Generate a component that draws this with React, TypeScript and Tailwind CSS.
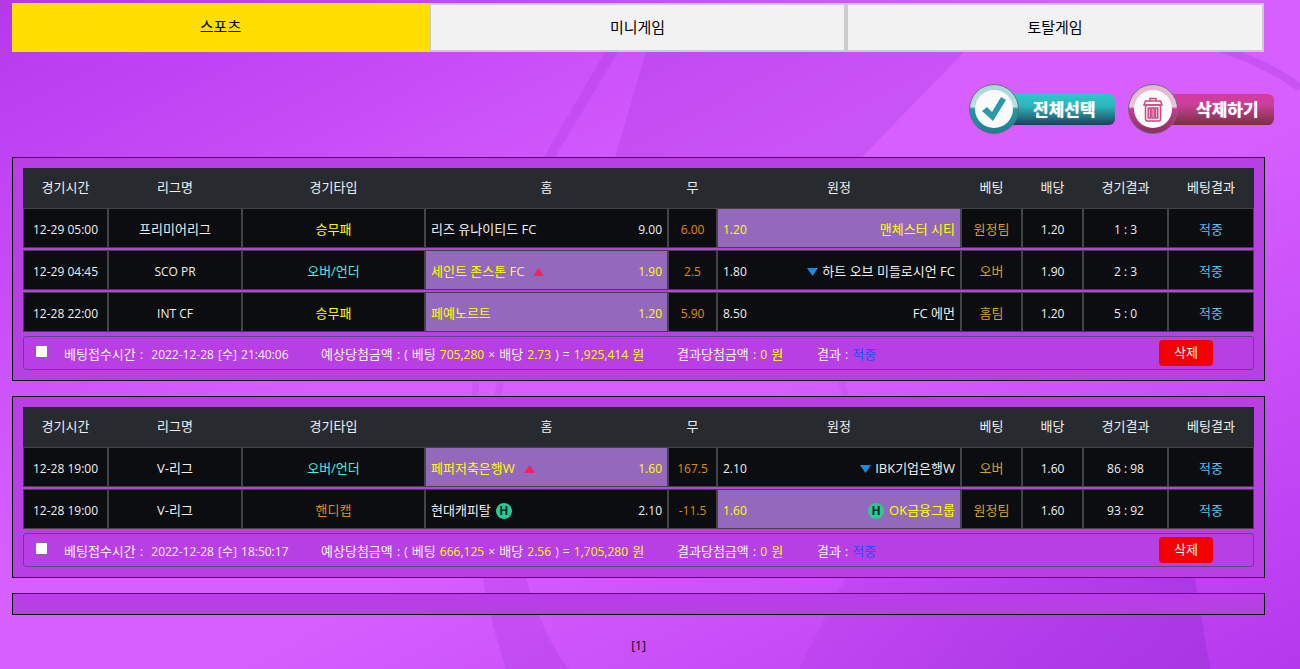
import React from "react";

const grid =
  "grid grid-cols-[85px_134px_183px_243px_49px_244px_61px_61px_85px_86px]";
const cell = "flex items-center border border-[#444] bg-[#0b0d10] h-[40px] pt-[4px]";

// korean text runs a size bigger than the latin numbers in the reference
const K = ({ children }: { children: React.ReactNode }) => (
  <span className="text-[13px]">{children}</span>
);

const Up = () => (
  <svg width="11" height="8" viewBox="0 0 11 8" className="ml-[9px]">
    <path d="M5.5 0 L11 8 L0 8 Z" fill="#f5225f" />
  </svg>
);

const Down = () => (
  <svg width="11" height="8" viewBox="0 0 11 8" className="mr-[4px]">
    <path d="M0 0 L11 0 L5.5 8 Z" fill="#1e88e5" />
  </svg>
);

const HBadge = ({ className = "" }: { className?: string }) => (
  <span
    className={`inline-flex items-center justify-center w-[16px] h-[16px] rounded-full bg-[#2dc997] text-[#0b2a20] text-[12px] font-bold ${className}`}
  >
    H
  </span>
);

type Side = { name: React.ReactNode; odds: string; picked?: boolean };

type Match = {
  time: string;
  league: React.ReactNode;
  type: string;
  typeColor: string;
  home: Side;
  mid: string;
  away: Side;
  bet: string;
  rate: string;
  score: string;
};

const MatchRow = ({ m }: { m: Match }) => {
  const homeBg = m.home.picked ? "bg-[#9468bd] text-[#ffff00]" : "bg-[#0b0d10] text-[#f0f0f0]";
  const awayBg = m.away.picked ? "bg-[#9468bd] text-[#ffff00]" : "bg-[#0b0d10] text-[#f0f0f0]";
  return (
    <div className={`${grid} pr-[1px]`}>
      <div className={`${cell} justify-center text-[#f0f0f0]`}>{m.time}</div>
      <div className={`${cell} justify-center text-[#f0f0f0]`}>{m.league}</div>
      <div className={`${cell} justify-center ${m.typeColor}`}><K>{m.type}</K></div>
      <div className={`${cell} ${homeBg} justify-between px-[5px]`}>
        <span className="flex items-center text-[13px]">{m.home.name}</span>
        <span>{m.home.odds}</span>
      </div>
      <div className={`${cell} justify-center text-[#e08a10]`}>{m.mid}</div>
      <div className={`${cell} ${awayBg} justify-between px-[5px]`}>
        <span>{m.away.odds}</span>
        <span className="flex items-center text-[13px]">{m.away.name}</span>
      </div>
      <div className={`${cell} justify-center text-[#d4a030]`}><K>{m.bet}</K></div>
      <div className={`${cell} justify-center text-[#f0f0f0]`}>{m.rate}</div>
      <div className={`${cell} justify-center text-[#f0f0f0]`}>{m.score}</div>
      <div className={`${cell} justify-center text-[#5bc0ee]`}><K>적중</K></div>
    </div>
  );
};

const headers = ["경기시간", "리그명", "경기타입", "홈", "무", "원정", "베팅", "배당", "경기결과", "베팅결과"];

type Bet = {
  matches: Match[];
  at: string;
  stake: string;
  rate: string;
  win: string;
};

const Y = "text-[#ffff00]";

const BetPanel = ({ bet }: { bet: Bet }) => (
  <section className="border border-black bg-[#b73fe3] p-[10px]">
    <div className={`${grid} bg-[#272b30] h-[40px] items-center text-center text-[13px] text-[#f0f0f0]`}>
      {headers.map((h) => (
        <div key={h}>{h}</div>
      ))}
    </div>
    <div className="flex flex-col gap-[2px]">
      {bet.matches.map((m) => (
        <MatchRow key={m.time + m.type + m.home.odds} m={m} />
      ))}
    </div>
    <div className="mt-[4px] h-[34px] flex items-center border border-[#5b4a80] rounded-[3px] text-[#f5f5f5] pl-[11px] [word-spacing:1px]">
      <input type="checkbox" className="w-[13px] h-[13px] appearance-none bg-white border border-[#767676] rounded-[2px] mb-[3px]" />
      <span className="ml-[16px] w-[257px] whitespace-nowrap pt-[4px]">
        <K>베팅접수시간</K> :&nbsp; {bet.at}
      </span>
      <span className="w-[356px] whitespace-nowrap pt-[4px]">
        <K>예상당첨금액</K> : ( <K>베팅</K> <span className={Y}>{bet.stake}</span> × <K>배당</K>{" "}
        <span className={Y}>{bet.rate}</span> ) = <span className={Y}>{bet.win} <K>원</K></span>
      </span>
      <span className="w-[140px] whitespace-nowrap pt-[4px]">
        <K>결과당첨금액</K> : <span className={Y}>0 <K>원</K></span>
      </span>
      <span className="w-[342px] whitespace-nowrap pt-[4px]">
        <K>결과</K> : <span className="text-[#1a4fff]"><K>적중</K></span>
      </span>
      <button className="w-[54px] h-[26px] bg-[#f50000] rounded-[4px] text-white"><K>삭제</K></button>
    </div>
  </section>
);

const bets: Bet[] = [
  {
    at: "2022-12-28 [수] 21:40:06",
    stake: "705,280",
    rate: "2.73",
    win: "1,925,414",
    matches: [
      {
        time: "12-29 05:00",
        league: <K>프리미어리그</K>,
        type: "승무패",
        typeColor: "text-[#ffff00]",
        home: { name: "리즈 유나이티드 FC", odds: "9.00" },
        mid: "6.00",
        away: { name: "맨체스터 시티", odds: "1.20", picked: true },
        bet: "원정팀",
        rate: "1.20",
        score: "1 : 3",
      },
      {
        time: "12-29 04:45",
        league: "SCO PR",
        type: "오버/언더",
        typeColor: "text-[#4deee0]",
        home: { name: <>세인트 존스톤 FC<Up /></>, odds: "1.90", picked: true },
        mid: "2.5",
        away: { name: <><Down />하트 오브 미들로시언 FC</>, odds: "1.80" },
        bet: "오버",
        rate: "1.90",
        score: "2 : 3",
      },
      {
        time: "12-28 22:00",
        league: "INT CF",
        type: "승무패",
        typeColor: "text-[#ffff00]",
        home: { name: "페예노르트", odds: "1.20", picked: true },
        mid: "5.90",
        away: { name: "FC 에먼", odds: "8.50" },
        bet: "홈팀",
        rate: "1.20",
        score: "5 : 0",
      },
    ],
  },
  {
    at: "2022-12-28 [수] 18:50:17",
    stake: "666,125",
    rate: "2.56",
    win: "1,705,280",
    matches: [
      {
        time: "12-28 19:00",
        league: <K>V-리그</K>,
        type: "오버/언더",
        typeColor: "text-[#4deee0]",
        home: { name: <>페퍼저축은행W<Up /></>, odds: "1.60", picked: true },
        mid: "167.5",
        away: { name: <><Down />IBK기업은행W</>, odds: "2.10" },
        bet: "오버",
        rate: "1.60",
        score: "86 : 98",
      },
      {
        time: "12-28 19:00",
        league: <K>V-리그</K>,
        type: "핸디캡",
        typeColor: "text-[#e08a10]",
        home: { name: <>현대캐피탈<HBadge className="ml-[5px]" /></>, odds: "2.10" },
        mid: "-11.5",
        away: { name: <><HBadge className="mr-[5px]" />OK금융그룹</>, odds: "1.60", picked: true },
        bet: "원정팀",
        rate: "1.60",
        score: "93 : 92",
      },
    ],
  },
];

const CheckIcon = () => (
  <svg width="24" height="24" viewBox="0 0 24 24">
    <path d="M0 14 L5 10 L10 15 L19 0 L24 3 L11 24 Z" fill="#2b9aa8" />
  </svg>
);

const TrashIcon = () => (
  <svg width="20" height="25" viewBox="0 0 20 25" fill="none" stroke="#c9487f" strokeWidth="1.5">
    <path d="M7 4 V1.5 H13 V4" />
    <path d="M1 8 L2.5 4 H17.5 L19 8 Z" />
    <rect x="2.5" y="8" width="15" height="16" rx="2" />
    <rect x="5.2" y="11" width="2.2" height="10" />
    <rect x="8.9" y="11" width="2.2" height="10" />
    <rect x="12.6" y="11" width="2.2" height="10" />
  </svg>
);

const ImgButton = ({
  label,
  bar,
  ring,
  icon,
  labelPad,
}: {
  label: string;
  bar: string;
  ring: string;
  icon: React.ReactNode;
  labelPad: string;
}) => (
  <div className="relative h-[50px] w-[146px] flex items-center">
    <div className={`ml-[24px] flex-1 h-[31px] rounded-r-[6px] flex items-center ${bar} ${labelPad}`}>
      <span className="text-white text-[17px] font-bold leading-none [text-shadow:0_0_1px_#fff]">{label}</span>
    </div>
    <div className={`absolute left-0 top-0 w-[50px] h-[50px] rounded-full flex items-center justify-center border border-[#6b6b7a] ${ring}`}>
      <div className="w-[38px] h-[38px] rounded-full bg-[#fbfafc] flex items-center justify-center">{icon}</div>
    </div>
  </div>
);

const App = () => {
  return (
    <div className="relative w-[1300px] h-[669px] overflow-hidden bg-[linear-gradient(to_bottom_right,#b638ee,#d75fff_42%,#d75fff_58%,#b638ee)] text-[12px] font-['Open_Sans','Noto_Sans_CJK_KR',sans-serif]">
      <svg className="absolute inset-0" width="1300" height="669" viewBox="0 0 1300 669" fill="none">
        <defs>
          <linearGradient id="lowerDark" x1="0" y1="0" x2="1" y2="0">
            <stop offset="0" stopColor="#9a2fd8" stopOpacity="0.15" />
            <stop offset="1" stopColor="#9a2fd8" stopOpacity="0.5" />
          </linearGradient>
        </defs>
        <path d="M646 52 H964 L862 157 H615 Z" fill="#9a2fd8" fillOpacity="0.22" />
        <path d="M605 52 H618 L555 157 H544 Z" fill="#9a2fd8" fillOpacity="0.2" />
        <path d="M1213 46 C1250 58 1280 72 1300 88" stroke="#9a2fd8" strokeOpacity="0.25" strokeWidth="8" />
        <path d="M472 381 H479 V396 H472 Z" fill="#9a2fd8" fillOpacity="0.15" />
        <path d="M497 381 H504 L501 396 H494 Z" fill="#9a2fd8" fillOpacity="0.15" />
        <path d="M838 381 H845 L849 396 H842 Z" fill="#9a2fd8" fillOpacity="0.15" />
        <path d="M483 578 H526 C535 610 550 645 569 669 H506 C497 640 488 610 483 578 Z" fill="#9a2fd8" fillOpacity="0.22" />
        <path d="M845 578 H1195 L1210 669 H799 Z" fill="url(#lowerDark)" />
      </svg>

      <div className="relative pl-[12px] pr-[35px]">
        <nav className="pt-[3px] flex text-[15px] text-black text-center w-[1252px]">
          <div className="w-[417px] h-[49px] leading-[47px] bg-[#ffdf00]">스포츠</div>
          <div className="w-[417px] h-[49px] leading-[45px] bg-[#f2f2f2] border-2 border-[#ccc]">미니게임</div>
          <div className="w-[418px] h-[49px] leading-[45px] bg-[#f2f2f2] border-2 border-[#ccc]">토탈게임</div>
        </nav>

        <div className="mt-[32px] flex justify-end gap-[13px] -mr-[9px]">
          <ImgButton
            label="전체선택"
            labelPad="pl-[40px]"
            bar="bg-[linear-gradient(#2fc6c9_0%,#2bb5bb_40%,#1f3f5a_100%)]"
            ring="bg-[linear-gradient(#a9d6d8_0%,#b8e0e0_45%,#1e9aa6_50%,#1f7f90_100%)]"
            icon={<CheckIcon />}
          />
          <ImgButton
            label="삭제하기"
            labelPad="pl-[44px]"
            bar="bg-[linear-gradient(#d63aa0_0%,#c8409a_35%,#7a3040_100%)]"
            ring="bg-[linear-gradient(#e2b6cf_0%,#eac4d8_45%,#c93a92_50%,#8a3060_100%)]"
            icon={<TrashIcon />}
          />
        </div>

        <div className="mt-[23px] flex flex-col gap-[15px] w-[1253px]">
          {bets.map((b) => (
            <BetPanel key={b.at} bet={b} />
          ))}
          <div className="h-[22px] border border-black bg-[#b73fe3]" />
        </div>

        <div className="mt-[22px] text-center text-black w-[1253px]">[1]</div>
      </div>
    </div>
  );
};

export default App;
